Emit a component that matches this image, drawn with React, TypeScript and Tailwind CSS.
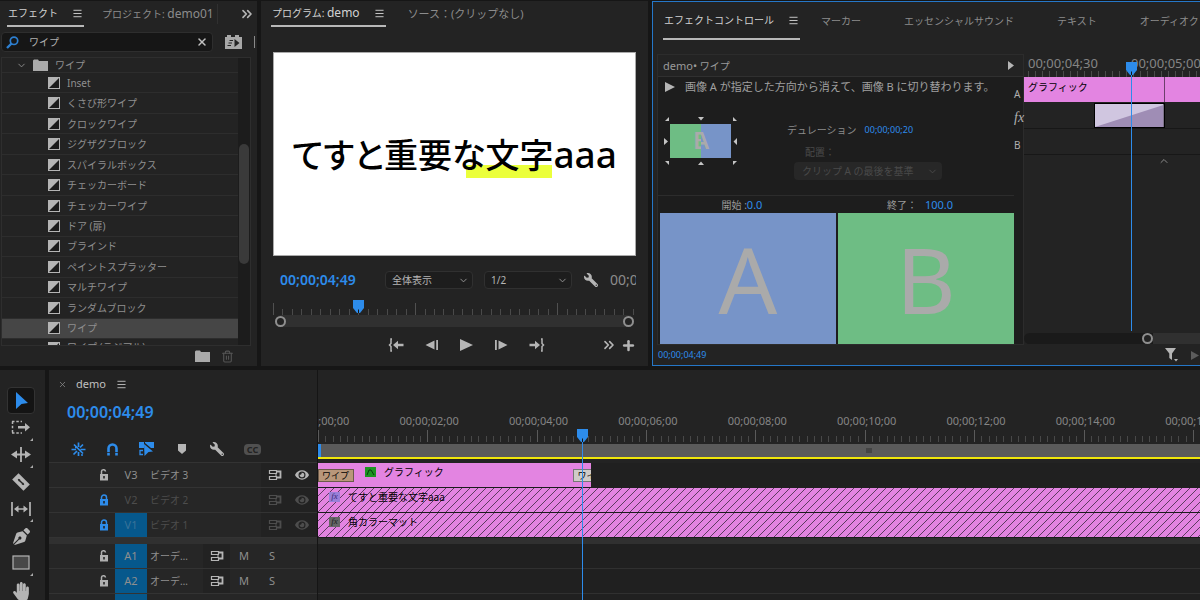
import React, { useState } from "react";
import { FaEye, FaHandPaper, FaPenNib, FaWrench } from "react-icons/fa";
import { ChevronDown, ChevronUp, ChevronsRight, Menu, Plus, Trash2, X } from "lucide-react";

const effects = [
  "Inset",
  "くさび形ワイプ",
  "クロックワイプ",
  "ジグザグブロック",
  "スパイラルボックス",
  "チェッカーボード",
  "チェッカーワイプ",
  "ドア (扉)",
  "ブラインド",
  "ペイントスプラッター",
  "マルチワイプ",
  "ランダムブロック",
  "ワイプ",
];

const timeLabels = [
  "00;00;00;00",
  "00;00;02;00",
  "00;00;04;00",
  "00;00;06;00",
  "00;00;08;00",
  "00;00;10;00",
  "00;00;12;00",
  "00;00;14;00",
  "00;00;16;00",
];

const videoTracks = [
  { id: "V3", name: "ビデオ 3", locked: false, source: false },
  { id: "V2", name: "ビデオ 2", locked: true, source: false },
  { id: "V1", name: "ビデオ 1", locked: true, source: true },
];

const audioTracks = ["A1", "A2"];

/* ---------- icons ---------- */

function FolderIcon({ className = "" }: { className?: string }) {
  return (
    <svg viewBox="0 0 15 12" className={`h-3 w-[15px] ${className}`} fill="currentColor">
      <path d="M0 1.5 L1 0.5 H5 L6 2 H15 V12 H0 Z" />
    </svg>
  );
}

function TransitionIcon() {
  return (
    <svg viewBox="0 0 12 12" className="h-3 w-3 shrink-0 text-[#b4b4b4]">
      <rect x="0.5" y="0.5" width="11" height="11" fill="#1b1b1b" stroke="currentColor" />
      <path d="M0 0 H12 L0 12 Z" fill="currentColor" />
    </svg>
  );
}

function PlayheadMarker() {
  return (
    <svg viewBox="0 0 11 13" className="h-[13px] w-[11px]">
      <path d="M0 0 H11 V8 L7 13 H4 L0 8 Z" fill="#2d8ceb" />
      <path d="M5.5 9.500 V13" stroke="#161616" strokeWidth="1" />
    </svg>
  );
}

function LockIcon({ locked }: { locked: boolean }) {
  return (
    <svg viewBox="0 0 10 12" className={locked ? "h-3 w-[10px] text-[#2d8ceb]" : "h-3 w-[10px] text-[#b0b0b0]"}>
      <path
        d={locked ? "M2.500 5.500 V3.500 a2.500 2.500 0 0 1 5 0 V5.500" : "M2.500 5.500 V3 a2 2 0 0 1 4 -0.500"}
        fill="none"
        stroke="currentColor"
        strokeWidth="1.5"
      />
      <path d="M1 5 H9 V11.500 H1 Z" fill="currentColor" />
      <path d="M5 7 V9.500" stroke="#1b1b1b" strokeWidth="1.500" />
    </svg>
  );
}

function SyncLockIcon() {
  return (
    <svg viewBox="0 0 14 12" className="h-3 w-[14px]" fill="none" stroke="currentColor">
      <path d="M8.500 1.500 H1.500 V4.500 H8.500 Z M8.500 7.500 H1.500 V10.500 H8.500 Z" strokeWidth="1.200" />
      <path d="M8 2.500 H12.500 V8.500 H8" strokeWidth="1.800" />
      <path d="M8 4.500 V7.500" />
    </svg>
  );
}

function GoToIn({ flip = false }: { flip?: boolean }) {
  return (
    <svg viewBox="0 0 16 14" className={flip ? "h-[14px] w-4 -scale-x-100" : "h-[14px] w-4"}>
      <path d="M4 1 H3 V5.500 L1.500 7 L3 8.500 V13 H4" fill="none" stroke="currentColor" strokeWidth="1.500" />
      <path d="M5 7 L10 2.800 V5.800 H15.500 V8.200 H10 V11.200 Z" fill="currentColor" />
    </svg>
  );
}

function StepIcon({ flip = false }: { flip?: boolean }) {
  return (
    <svg viewBox="0 0 14 10" className={flip ? "h-[10px] w-[14px] -scale-x-100" : "h-[10px] w-[14px]"} fill="currentColor">
      <path d="M1 0 H2.800 V10 H1 Z M4.500 0.500 L13.500 5 L4.500 9.500 Z" />
    </svg>
  );
}

const tools = [
  {
    name: "選択ツール",
    more: false,
    icon: <path d="M5 1 L17 12 L10.500 13 L5 18 Z" fill="#2d8ceb" />,
  },
  {
    name: "トラックの前方選択ツール",
    more: true,
    icon: (
      <>
        <path d="M1 3.500 H11 M1 15 H11 M1.500 3.500 V15" stroke="currentColor" strokeWidth="1.500" strokeDasharray="2.500 1.800" fill="none" />
        <path d="M7 8 H14 V5 L19 9.300 L14 13.500 V10.500 H7 Z" fill="currentColor" />
      </>
    ),
  },
  {
    name: "リップルツール",
    more: true,
    icon: (
      <>
        <path d="M10 2 V17" stroke="currentColor" strokeWidth="1.800" />
        <path d="M0 9.500 L6 5.500 V8.500 H14 V5.500 L20 9.500 L14 13.500 V10.500 H6 V13.500 Z" fill="currentColor" />
      </>
    ),
  },
  {
    name: "レーザーツール",
    more: false,
    icon: (
      <g transform="rotate(45 10 10)">
        <path d="M2 5.500 H18 V14.500 H2 Z" fill="currentColor" />
        <path d="M6 10 H14 M7.500 9 V11 M12.500 9 V11" stroke="#232323" strokeWidth="1.400" />
      </g>
    ),
  },
  {
    name: "スリップツール",
    more: true,
    icon: (
      <>
        <path d="M1 3 V17 M19 3 V17" stroke="currentColor" strokeWidth="1.700" />
        <path d="M3 10 L7.500 6.500 V9.200 H12.500 V6.500 L17 10 L12.500 13.500 V10.800 H7.500 V13.500 Z" fill="currentColor" />
      </>
    ),
  },
  { name: "ペンツール", more: false, icon: <FaPenNib size={17} x={2} y={2} /> },
  {
    name: "長方形ツール",
    more: true,
    icon: <rect x="2" y="3" width="16" height="13" fill="#484848" stroke="currentColor" strokeWidth="1.200" />,
  },
  { name: "手のひらツール", more: true, icon: <FaHandPaper size={18} x={1} y={2} /> },
];

/* ---------- shared pieces ---------- */

function ActiveTab({ children }: { children: React.ReactNode }) {
  return (
    <button className="flex h-full shrink-0 items-center gap-[14px] border-b-2 border-[#b8b8b8] px-px whitespace-nowrap text-[#d2d2d2]">
      {children}
      <Menu size={11} strokeWidth={2} />
    </button>
  );
}

function PanelTab({ children }: { children: React.ReactNode }) {
  return <button className="shrink-0 whitespace-nowrap text-[#8c8c8c]">{children}</button>;
}

function MonitorSelect({ label, value }: { label: string; value: string }) {
  return (
    <div className="relative w-[88px] text-[#b5b5b5]">
      <select
        aria-label={label}
        defaultValue={value}
        className="h-[18px] w-full appearance-none rounded-sm border border-[#303030] bg-[#1d1d1d] pl-[6px] text-[10px] leading-4"
      >
        <option>{value}</option>
      </select>
      <ChevronDown size={11} className="pointer-events-none absolute top-1 right-1 text-[#999]" />
    </div>
  );
}

/* ---------- panels ---------- */

function EffectsPanel() {
  const [query, setQuery] = useState("ワイプ");
  const [selected, setSelected] = useState(12);

  return (
    <section className="flex min-w-0 flex-col overflow-hidden bg-[#232323]">
      <div className="flex h-[26px] items-center pl-[7px]">
        <ActiveTab>エフェクト</ActiveTab>
        <div className="ml-[18px] flex h-5 items-center border-r border-[#303030] pr-[3px]">
          <PanelTab>
            プロジェクト: <span className="text-[12px]">demo01</span>
          </PanelTab>
        </div>
        <button aria-label="その他のパネル" className="mr-[2px] ml-auto text-[#b5b5b5]">
          <ChevronsRight size={16} strokeWidth={2.5} />
        </button>
      </div>

      <div className="mt-[5px] flex items-center">
        <div className="ml-px flex h-[20px] min-w-0 flex-1 items-center rounded-sm border border-[#2e2e2e] bg-[#161616] px-1">
          <svg viewBox="0 0 13 13" className="h-[13px] w-[13px] shrink-0" fill="none" stroke="#2d7fd0">
            <circle cx="8" cy="4.800" r="3.700" strokeWidth="1.700" />
            <path d="M5.500 7.500 L1 12" strokeWidth="2.400" />
          </svg>
          <input
            aria-label="エフェクトを検索"
            value={query}
            onChange={(e) => setQuery(e.target.value)}
            className="ml-[10px] w-full min-w-0 bg-transparent text-[#b0b0b0] outline-none"
          />
          <button aria-label="検索をクリア" onClick={() => setQuery("")} className="text-[#c0c0c0]">
            <X size={12} strokeWidth={3} />
          </button>
        </div>
        <button aria-label="高速処理エフェクト" className="ml-3 text-[#a8a8a8]">
          <svg viewBox="0 0 17 14" className="h-[14px] w-[17px]">
            <path d="M0 2 H2 V0 H6 V2 H10 V0 H14 V2 H17 V14 H0 Z" fill="currentColor" />
            <path d="M9.500 4 L14.500 8 L9.500 12 Z" fill="#232323" />
            <path d="M4.500 5.500 H8 M3.500 8 H7 M2.500 10.500 H6" stroke="#232323" />
          </svg>
        </button>
        <span className="mr-[2px] ml-3 h-3 w-px bg-[#8a8a8a]" />
      </div>

      <div className="mt-[5px] mr-[6px] ml-px flex min-h-0 flex-1 border border-[#2e2e2e]">
        <ul className="flex min-w-0 flex-1 flex-col text-[#8f8f8f]">
          <li className="flex h-[14px] shrink-0 items-center overflow-hidden pl-[14px]">
            <ChevronDown size={11} />
            <FolderIcon className="ml-[6px] text-[#aaa]" />
            <span className="ml-[7px]">ワイプ</span>
          </li>
          {effects.map((name, i) => (
            <li key={name} className="min-h-0 flex-1 border-t border-[#2d2d2d]">
              <button
                onClick={() => setSelected(i)}
                className={
                  i === selected
                    ? "flex h-full w-full items-center gap-[7px] bg-[#464646] pl-[46px] leading-none"
                    : "flex h-full w-full items-center gap-[7px] pl-[46px] leading-none"
                }
              >
                <TransitionIcon />
                {name}
              </button>
            </li>
          ))}
          <li className="flex h-[7px] shrink-0 items-start gap-[7px] overflow-hidden border-t border-[#2d2d2d] pt-[3px] pl-[46px] leading-none">
            <TransitionIcon />
            ワイプ (ラジアル)
          </li>
        </ul>
        <div className="flex w-3 flex-col bg-[#1c1c1c] px-px">
          <div className="mt-[86px] h-[120px] rounded-full bg-[#3a3a3a]" />
        </div>
      </div>

      <div className="flex h-5 shrink-0 items-center justify-end gap-[11px] pr-[23px] text-[#aaa]">
        <button aria-label="新規カスタムビン">
          <FolderIcon />
        </button>
        <button aria-label="削除" className="text-[#555]">
          <Trash2 size={13} />
        </button>
      </div>
    </section>
  );
}

function ProgramPanel() {
  return (
    <section className="flex min-w-0 flex-col overflow-hidden bg-[#232323]">
      <div className="flex h-[26px] shrink-0 items-center gap-[22px] pl-[10px]">
        <ActiveTab>
          <span>
            プログラム: <span className="text-[12px]">demo</span>
          </span>
        </ActiveTab>
        <PanelTab>
          <span className="text-[11px]">ソース：(クリップなし)</span>
        </PanelTab>
      </div>

      <div className="mx-3 mt-[25px] flex min-h-0 flex-1 items-center justify-center border border-[#aaa] bg-white">
        <div className="relative flex items-baseline whitespace-nowrap text-black">
          <span className="absolute right-[65px] -bottom-4 h-[13px] w-[86px] bg-[#ebff3b]" />
          <span className="relative font-['Noto_Sans_CJK_JP',sans-serif] text-[34px] font-medium [font-feature-settings:'palt']">
            てすと重要な文字
          </span>
          <span className="relative text-[37px] font-medium">aaa</span>
        </div>
      </div>

      <div className="mx-3 mt-[14px] flex h-5 shrink-0 items-center overflow-hidden">
        <span className="ml-[7px] w-[78px] text-[14px] font-semibold whitespace-nowrap text-[#2d8ceb]">00;00;04;49</span>
        <div className="ml-[27px] flex gap-[11px]">
          <MonitorSelect label="ズームレベルを選択" value="全体表示" />
          <MonitorSelect label="再生時の解像度" value="1/2" />
        </div>
        <button aria-label="設定" className="ml-3 text-[#b5b5b5]">
          <FaWrench size={14} className="-scale-x-100" />
        </button>
        <span className="ml-3 min-w-0 flex-1 overflow-hidden text-[14px] whitespace-nowrap text-[#8c8c8c]">00;00;07;00</span>
      </div>

      <div className="relative mx-3 mt-[13px] flex h-3 shrink-0 items-end justify-between pr-[2px]">
        {Array.from({ length: 39 }, (_, i) => (
          <span key={i} className={i % 15 === 0 ? "h-3 w-px bg-[#505050]" : "h-[6px] w-px bg-[#4a4a4a]"} />
        ))}
        <div className="absolute -top-[3px] left-[22%]">
          <PlayheadMarker />
        </div>
      </div>
      <div className="mx-[14px] flex h-3 shrink-0 items-center justify-between rounded-full bg-[#303030]">
        <span className="h-[11px] w-[11px] rounded-full border-2 border-[#8f8f8f] bg-[#232323]" />
        <span className="h-[11px] w-[11px] rounded-full border-2 border-[#8f8f8f] bg-[#232323]" />
      </div>

      <div className="mt-2 mb-[11px] flex h-5 shrink-0 items-center pr-3 pl-[127px] text-[#b5b5b5]">
        <div className="flex items-center gap-[21px]">
          <button aria-label="インへ移動">
            <GoToIn />
          </button>
          <button aria-label="1 フレーム前へ戻る">
            <StepIcon flip />
          </button>
          <button aria-label="再生">
            <svg viewBox="0 0 13 12" className="h-3 w-[13px]" fill="currentColor">
              <path d="M0 0 L13 6 L0 12 Z" />
            </svg>
          </button>
          <button aria-label="1 フレーム先へ進む">
            <StepIcon />
          </button>
          <button aria-label="アウトへ移動">
            <GoToIn flip />
          </button>
        </div>
        <button aria-label="その他のボタン" className="ml-auto">
          <ChevronsRight size={16} strokeWidth={2.5} />
        </button>
        <button aria-label="ボタンエディター" className="ml-1">
          <Plus size={15} strokeWidth={4} />
        </button>
      </div>
    </section>
  );
}

function WipeThumbnail() {
  return (
    <svg viewBox="0 0 75 52" className="h-[52px] w-[75px] shrink-0">
      <clipPath id="half-b">
        <rect x="7" y="9" width="31" height="35" />
      </clipPath>
      <clipPath id="half-a">
        <rect x="38" y="9" width="31" height="35" />
      </clipPath>
      <rect x="7" y="9" width="31" height="34" fill="#6ebd84" />
      <rect x="38" y="9" width="30" height="34" fill="#7794c8" />
      <g fontSize="24" fontWeight="600" fill="#aaa" textAnchor="middle">
        <text x="38" y="34" clipPath="url(#half-b)">B</text>
        <text x="38" y="34" clipPath="url(#half-a)">A</text>
      </g>
      <g fill="#c4c4c4">
        <path d="M2 6 L6 2 V6 Z M35 2 H41 L38 5.500 Z M70 2 L74 6 H70 Z" />
        <path d="M1 23 L5 26.500 L1 30 Z M74 23 L70.500 26.500 L74 30 Z" />
        <path d="M2 46 H6 V50 Z M35 50 H41 L38 46.500 Z M70 46 H74 L70 50 Z" />
      </g>
    </svg>
  );
}

function EffectControlsPanel() {
  return (
    <section className="flex min-w-0 flex-col overflow-hidden border border-r-0 border-[#2577c8] bg-[#232323]">
      <div className="flex h-[38px] shrink-0 items-center gap-[21px] pl-[10px]">
        <ActiveTab>エフェクトコントロール</ActiveTab>
        <div className="flex gap-[43px]">
          <PanelTab>マーカー</PanelTab>
          <PanelTab>エッセンシャルサウンド</PanelTab>
          <PanelTab>テキスト</PanelTab>
          <PanelTab>オーディオクリップミキサー</PanelTab>
        </div>
      </div>

      <div className="mt-[14px] ml-1 grid min-h-0 flex-1 grid-cols-[367fr_176fr]">
        <div className="flex min-w-0 flex-col border border-[#2c2c2c]">
          <div className="flex h-[22px] shrink-0 items-center justify-between border-b border-[#303030] pr-[9px] pl-[5px] text-[#9a9a9a]">
            <span>
              <span className="text-[11px]">demo•</span> ワイプ
            </span>
            <button aria-label="タイムラインビューを表示">
              <svg viewBox="0 0 6 9" className="h-[9px] w-[6px]" fill="#b5b5b5">
                <path d="M0 0 L6 4.500 L0 9 Z" />
              </svg>
            </button>
          </div>

          <div className="flex min-h-0 flex-1 bg-[#1d1d1d]">
            <div className="flex min-w-0 flex-1 flex-col">
              <div className="flex h-5 shrink-0 items-center gap-[10px] pl-[7px] text-[11px] whitespace-nowrap text-[#a0a0a0]">
                <button aria-label="トランジションを再生">
                  <svg viewBox="0 0 10 10" className="h-[10px] w-[10px]" fill="#b5b5b5">
                    <path d="M0 0 L10 5 L0 10 Z" />
                  </svg>
                </button>
                画像 A が指定した方向から消えて、画像 B に切り替わります。
              </div>

              <div className="flex h-[99px] shrink-0 items-start border-b border-[#2c2c2c] pt-[18px] pl-[5px]">
                <WipeThumbnail />
                <div className="ml-[49px] flex flex-col">
                  <div className="flex h-[30px] items-center gap-2 text-[#8c8c8c]">
                    デュレーション
                    <span className="text-[9px] text-[#2d8ceb]">00;00;00;20</span>
                  </div>
                  <label htmlFor="alignment" className="pl-[18px] leading-[14px] text-[#4a4a4a]">
                    配置：
                  </label>
                  <div className="relative mt-[3px] ml-[7px] w-[148px] text-[#4a4a4a]">
                    <select
                      id="alignment"
                      disabled
                      className="h-[18px] w-full appearance-none rounded-sm bg-[#272727] pl-[8px] text-[10px] leading-4"
                    >
                      <option>クリップ A の最後を基準</option>
                    </select>
                    <ChevronDown size={11} className="pointer-events-none absolute top-1 right-1" />
                  </div>
                </div>
              </div>

              <div className="grid min-h-0 flex-1 grid-cols-2 grid-rows-[17px_minmax(0,1fr)] gap-x-[2px] pl-[2px] text-[#9a9a9a]">
                <div className="flex items-center justify-center pr-3 whitespace-nowrap">
                  開始 :<span className="text-[11px] text-[#2d8ceb]">0.0</span>
                </div>
                <div className="flex items-center justify-center gap-2 pr-3 whitespace-nowrap">
                  終了：<span className="text-[11px] text-[#2d8ceb]">100.0</span>
                </div>
                <div className="flex items-center justify-center bg-[#7794c8] text-[92px] leading-none text-[#aaa]">A</div>
                <div className="flex items-center justify-center bg-[#6ebd84] text-[92px] leading-none text-[#aaa]">B</div>
              </div>
            </div>
            <div className="flex w-[9px] flex-col items-start pt-[5px] text-[#b0b0b0]">
              <span className="leading-6">A</span>
              <span className="font-['Liberation_Serif',serif] text-[14px] leading-6 italic">fx</span>
              <span className="pt-[3px] leading-6">B</span>
            </div>
          </div>
        </div>

        <div className="relative flex min-w-0 flex-col overflow-hidden">
          <div className="flex h-[17px] shrink-0 items-center gap-[33px] pl-1 text-[13px] whitespace-nowrap text-[#858585]">
            <span>00;00;04;30</span>
            <span>00;00;05;00</span>
          </div>
          <div className="flex h-[6px] shrink-0 gap-[6px] pl-1">
            {Array.from({ length: 32 }, (_, i) => (
              <span key={i} className="w-px shrink-0 bg-[#4a4a4a]" />
            ))}
          </div>
          <div className="flex h-[25px] shrink-0 text-black">
            <div className="w-[80%] border-r border-[#6d3f6c] bg-[#e384e1] pl-1 leading-5">グラフィック</div>
            <div className="flex-1 bg-[#e384e1]" />
          </div>
          <div className="h-[27px] shrink-0 border-b border-[#171717] pt-px pl-[40%]">
            <svg viewBox="0 0 70 25" preserveAspectRatio="none" className="h-[25px] w-2/3 border border-black">
              <rect width="70" height="25" fill="#d0c6e0" />
              <path d="M0 25 L70 1 V25 Z" fill="#9f8db5" />
            </svg>
          </div>
          <div className="h-[26px] shrink-0 border-b border-[#171717]" />
          <div className="flex pl-[76%] text-[#8a8a8a]">
            <ChevronUp size={12} />
          </div>
          <div className="mt-auto mb-px flex h-[11px] shrink-0 items-center rounded-l-full bg-[#1a1a1a]">
            <span className="-mr-[6px] ml-[67%] h-[11px] w-[11px] shrink-0 rounded-full border-2 border-[#8f8f8f] bg-[#232323]" />
            <span className="ml-[6px] h-full flex-1 bg-[#303030]" />
          </div>
          {/* playhead */}
          <div className="absolute top-2 bottom-[14px] left-[58%] flex w-[11px] flex-col items-center">
            <PlayheadMarker />
            <span className="w-px flex-1 bg-[#2d8ceb]" />
          </div>
        </div>
      </div>

      <div className="flex h-5 shrink-0 items-center pl-[5px]">
        <span className="text-[9px] text-[#2d8ceb]">00;00;04;49</span>
        <button aria-label="プロパティをフィルター" className="ml-auto text-[#b5b5b5]">
          <svg viewBox="0 0 14 14" className="h-[14px] w-[14px]" fill="currentColor">
            <path d="M0 0 H11 L7 5.500 V12 L4.300 10 V5.500 Z M9 11 H13 L11 13.500 Z" />
          </svg>
        </button>
        <button aria-label="オーディオのみ再生" className="ml-3 text-[#5c5c5c]">
          <svg viewBox="0 0 9 9" className="h-[9px] w-[9px]" fill="currentColor">
            <path d="M0 0 L8 4.500 L0 9 Z" />
          </svg>
        </button>
      </div>
    </section>
  );
}

function ToolsPanel() {
  const [active, setActive] = useState(0);

  return (
    <aside className="flex w-[45px] shrink-0 flex-col overflow-hidden bg-[#232323] pt-[17px] pl-[7px]">
      {tools.map((tool, i) => (
        <button
          key={tool.name}
          aria-label={tool.name}
          onClick={() => setActive(i)}
          className={
            i === active
              ? "relative flex h-[27px] w-7 shrink-0 items-center justify-center rounded-sm border border-[#333] bg-[#141414] text-[#b5b5b5]"
              : "relative flex h-[27px] w-7 shrink-0 items-center justify-center text-[#b5b5b5]"
          }
        >
          <svg viewBox="0 0 20 20" className="h-5 w-5">
            {tool.icon}
          </svg>
          {tool.more && (
            <svg viewBox="0 0 3 3" className="absolute right-[2px] bottom-0 h-[3px] w-[3px]">
              <path d="M3 0 V3 H0 Z" fill="#aaa" />
            </svg>
          )}
        </button>
      ))}
    </aside>
  );
}

function TrackHeaders() {
  return (
    <div className="flex min-h-0 flex-1 flex-col text-[#8f8f8f]">
      {videoTracks.map((track) => (
        <div
          key={track.id}
          className={
            track.locked
              ? "flex h-[25px] shrink-0 items-center border-b border-[#333] bg-[#262626] text-[#4d4d4d]"
              : "flex h-[25px] shrink-0 items-center border-b border-[#333] bg-[#262626]"
          }
        >
          <button aria-label="トラックのロック切り替え" className="ml-[50px]">
            <LockIcon locked={track.locked} />
          </button>
          <span
            className={
              track.source
                ? "ml-[6px] flex h-full w-8 items-center justify-center bg-[#06588c] text-[11px] text-[#3a7399]"
                : "ml-[6px] flex h-full w-8 items-center justify-center text-[11px]"
            }
          >
            {track.id}
          </span>
          <span className="ml-[3px] flex-1">{track.name}</span>
          <div
            className={
              track.locked
                ? "flex h-full w-14 items-center justify-between bg-[#222] pr-2 pl-[7px] text-[#4d4d4d]"
                : "flex h-full w-14 items-center justify-between bg-[#222] pr-2 pl-[7px] text-[#b5b5b5]"
            }
          >
            <button aria-label="同期ロック">
              <SyncLockIcon />
            </button>
            <button aria-label="トラック出力の切り替え">
              <FaEye size={14} />
            </button>
          </div>
        </div>
      ))}
      <div className="h-[6px] shrink-0 bg-[#303030]" />
      {audioTracks.map((id) => (
        <div key={id} className="flex h-[25px] shrink-0 items-center border-b border-[#333] bg-[#262626]">
          <button aria-label="トラックのロック切り替え" className="ml-[50px]">
            <LockIcon locked={false} />
          </button>
          <span className="ml-[6px] flex h-full w-8 items-center justify-center bg-[#06588c] text-[11px]">{id}</span>
          <span className="ml-[3px] w-[53px]">オーデ…</span>
          <button aria-label="同期ロック" className="flex h-full w-[27px] items-center justify-center bg-[#222] text-[#b5b5b5]">
            <SyncLockIcon />
          </button>
          <button aria-label="トラックをミュート" className="ml-[6px] w-4 text-[11px]">
            M
          </button>
          <button aria-label="ソロトラック" className="ml-3 w-4 text-[11px]">
            S
          </button>
        </div>
      ))}
      <div className="min-h-0 flex-1 bg-[#262626] pl-[66px]">
        <div className="h-full w-8 bg-[#06588c]" />
      </div>
    </div>
  );
}

function FxBadge({ className }: { className: string }) {
  return (
    <span
      className={`flex h-[10px] w-[11px] items-center justify-center font-['Liberation_Serif',serif] text-[9px] leading-none italic ${className}`}
    >
      fx
    </span>
  );
}

function LockedClip({ name, badge }: { name: string; badge: string }) {
  return (
    <div className="relative h-[25px] shrink-0 border-b border-[#1c1c1c] bg-[#e384e1] text-black">
      <svg className="absolute inset-0 h-full w-full">
        <defs>
          <pattern id="hatch" width="8" height="8" patternUnits="userSpaceOnUse">
            <path d="M-2 2 L2 -2 M0 8 L8 0 M6 10 L10 6" stroke="#4f3352" strokeWidth="0.900" />
          </pattern>
        </defs>
        <rect width="100%" height="100%" fill="url(#hatch)" />
      </svg>
      <div className="relative flex h-[17px] items-center gap-2 pl-[11px]">
        <FxBadge className={badge} />
        <span>{name}</span>
      </div>
    </div>
  );
}

function TimelineTracks() {
  return (
    <div className="relative flex min-w-0 flex-col overflow-hidden border-l border-[#151515] bg-[#202020]">
      <div className="flex h-[93px] shrink-0 flex-col bg-[#232323]">
        <div className="mt-[43px] -ml-[6%] flex h-[17px] text-[11px] text-[#858585]">
          {timeLabels.map((label) => (
            <span key={label} className="w-[11.7%] shrink-0 text-center whitespace-nowrap">
              {label}
            </span>
          ))}
        </div>
        <div className="flex h-3">
          {timeLabels.map((label) => (
            <div key={label} className="flex w-[12.4%] shrink-0 items-end">
              {Array.from({ length: 15 }, (_, i) => (
                <span key={i} className={i === 0 ? "h-3 flex-1 border-l border-[#5a5a5a]" : "h-[6px] flex-1 border-l border-[#484848]"} />
              ))}
            </div>
          ))}
        </div>
        <div className="relative mt-[2px] h-[13px] shrink-0 border-l-[3px] border-[#2d8ceb] bg-[#5a5a5a]">
          <span className="absolute top-1 left-[62%] h-[5px] w-[6px] bg-[#444]" />
        </div>
        <div className="h-[2px] shrink-0 bg-[#f0e60a]" />
      </div>

      <div className="h-[25px] shrink-0">
        <div className="relative flex h-[25px] w-[31%] border-b border-[#1c1c1c] bg-[#e384e1] text-black">
          <span className="mt-[6px] h-[13px] w-9 border border-[#6b5a4a] bg-[#b9977a] pl-[3px] text-[9px] leading-[11px]">ワイプ</span>
          <div className="ml-[11px] flex h-[17px] items-center gap-2">
            <span className="flex h-[10px] w-[11px] items-center justify-center bg-[#1d9422] text-[#0a3c0c]">
              <svg viewBox="0 0 9 8" className="h-2 w-[9px]" fill="none" stroke="currentColor">
                <path d="M1 7 L3 2 L5 2 L8 7" />
              </svg>
            </span>
            グラフィック
          </div>
          <span className="mt-[6px] ml-auto h-[13px] w-[18px] overflow-hidden border border-r-0 border-[#777] bg-[#cfcbc8] pl-[3px] text-[9px] leading-[11px] whitespace-nowrap">
            ワイプ
          </span>
        </div>
      </div>
      <LockedClip name="てすと重要な文字aaa" badge="bg-[#9a80d8] text-[#3b2a78]" />
      <LockedClip name="角カラーマット" badge="bg-[#666] text-[#1c1c1c]" />
      <div className="h-[6px] shrink-0 bg-[#303030]" />
      <div className="h-[25px] shrink-0 border-b border-[#303030]" />
      <div className="h-[25px] shrink-0 border-b border-[#303030]" />

      {/* playhead */}
      <div className="absolute top-[59px] bottom-0 left-[29.4%] flex w-[11px] flex-col items-center">
        <PlayheadMarker />
        <span className="w-px flex-1 bg-[#2d8ceb]" />
      </div>
    </div>
  );
}

function TimelinePanel() {
  return (
    <section className="grid min-w-0 flex-1 grid-cols-[268px_minmax(0,1fr)] overflow-hidden bg-[#232323]">
      <div className="flex min-h-0 flex-col">
        <div className="flex h-[93px] shrink-0 flex-col border-b border-[#333]">
          <div className="flex h-7 items-center pl-[9px] text-[#c0c0c0]">
            <button aria-label="シーケンスを閉じる" className="text-[#8c8c8c]">
              <X size={9} />
            </button>
            <span className="ml-[9px] text-[11px]">demo</span>
            <button aria-label="パネルメニュー" className="ml-[10px]">
              <Menu size={11} />
            </button>
          </div>
          <span className="pl-[18px] text-[16px] leading-7 font-semibold text-[#2d8ceb]">00;00;04;49</span>
          <div className="mt-[14px] flex h-[18px] items-center gap-5 pl-[22px] text-[#2d8ceb]">
            <button aria-label="ネストとしてシーケンスを挿入">
              <svg viewBox="0 0 15 15" className="h-[15px] w-[15px]" stroke="currentColor" strokeWidth="1.700" fill="none">
                <path d="M7.500 0.500 V5 M7.500 10 V14 M3 2.500 L12 11.500 M4 5.500 H6 M0.500 7.500 H5 M2.500 12.500 L6 9 M9 5.500 L12 2.500 M9.500 7.500 H14.500 M10 13 H12" />
              </svg>
            </button>
            <button aria-label="スナップ">
              <svg viewBox="0 0 13 13" className="h-[13px] w-[13px]" fill="none" stroke="currentColor" strokeWidth="2.600">
                <path d="M2.500 12.500 V5.500 a4 4 0 0 1 8 0 V12.500" />
                <path d="M1 9.500 H4 M9 9.500 H12" stroke="#232323" strokeWidth="0.800" />
              </svg>
            </button>
            <button aria-label="リンクされた選択">
              <svg viewBox="0 0 15 14" className="h-[14px] w-[15px]" fill="currentColor">
                <path d="M0 0 H5 V6 H0 Z M6 0 H15 V6 H12 L6 1 Z" />
                <path d="M5 2 L14 9.500 L9.500 10 L5.500 14 Z" />
                <path d="M4 8.500 H1 V12.500 H4" fill="none" stroke="currentColor" strokeWidth="1.300" />
              </svg>
            </button>
            <button aria-label="マーカーを追加" className="mx-1 text-[#b5b5b5]">
              <svg viewBox="0 0 8 10" className="h-[10px] w-2" fill="currentColor">
                <path d="M0 0 H8 V6.500 L4 10 L0 6.500 Z" />
              </svg>
            </button>
            <button aria-label="タイムライン表示設定" className="text-[#b5b5b5]">
              <FaWrench size={14} className="-scale-x-100" />
            </button>
            <button
              aria-label="キャプショントラックのオプション"
              className="flex h-[11px] w-[17px] items-center justify-center rounded-sm bg-[#505050] text-[9px] leading-none font-bold text-[#232323]"
            >
              CC
            </button>
          </div>
        </div>
        <TrackHeaders />
      </div>
      <TimelineTracks />
    </section>
  );
}

export default function App() {
  return (
    <div className="flex h-screen flex-col gap-1 overflow-hidden bg-[#161616] font-['Noto_Sans','Noto_Sans_CJK_JP',sans-serif] text-[10px] leading-4">
      <div className="grid h-[61vh] shrink-0 grid-cols-[257fr_387fr_548fr] grid-rows-[minmax(0,1fr)] gap-1 pt-px">
        <EffectsPanel />
        <ProgramPanel />
        <EffectControlsPanel />
      </div>
      <div className="flex min-h-0 flex-1 gap-1">
        <ToolsPanel />
        <TimelinePanel />
      </div>
    </div>
  );
}
